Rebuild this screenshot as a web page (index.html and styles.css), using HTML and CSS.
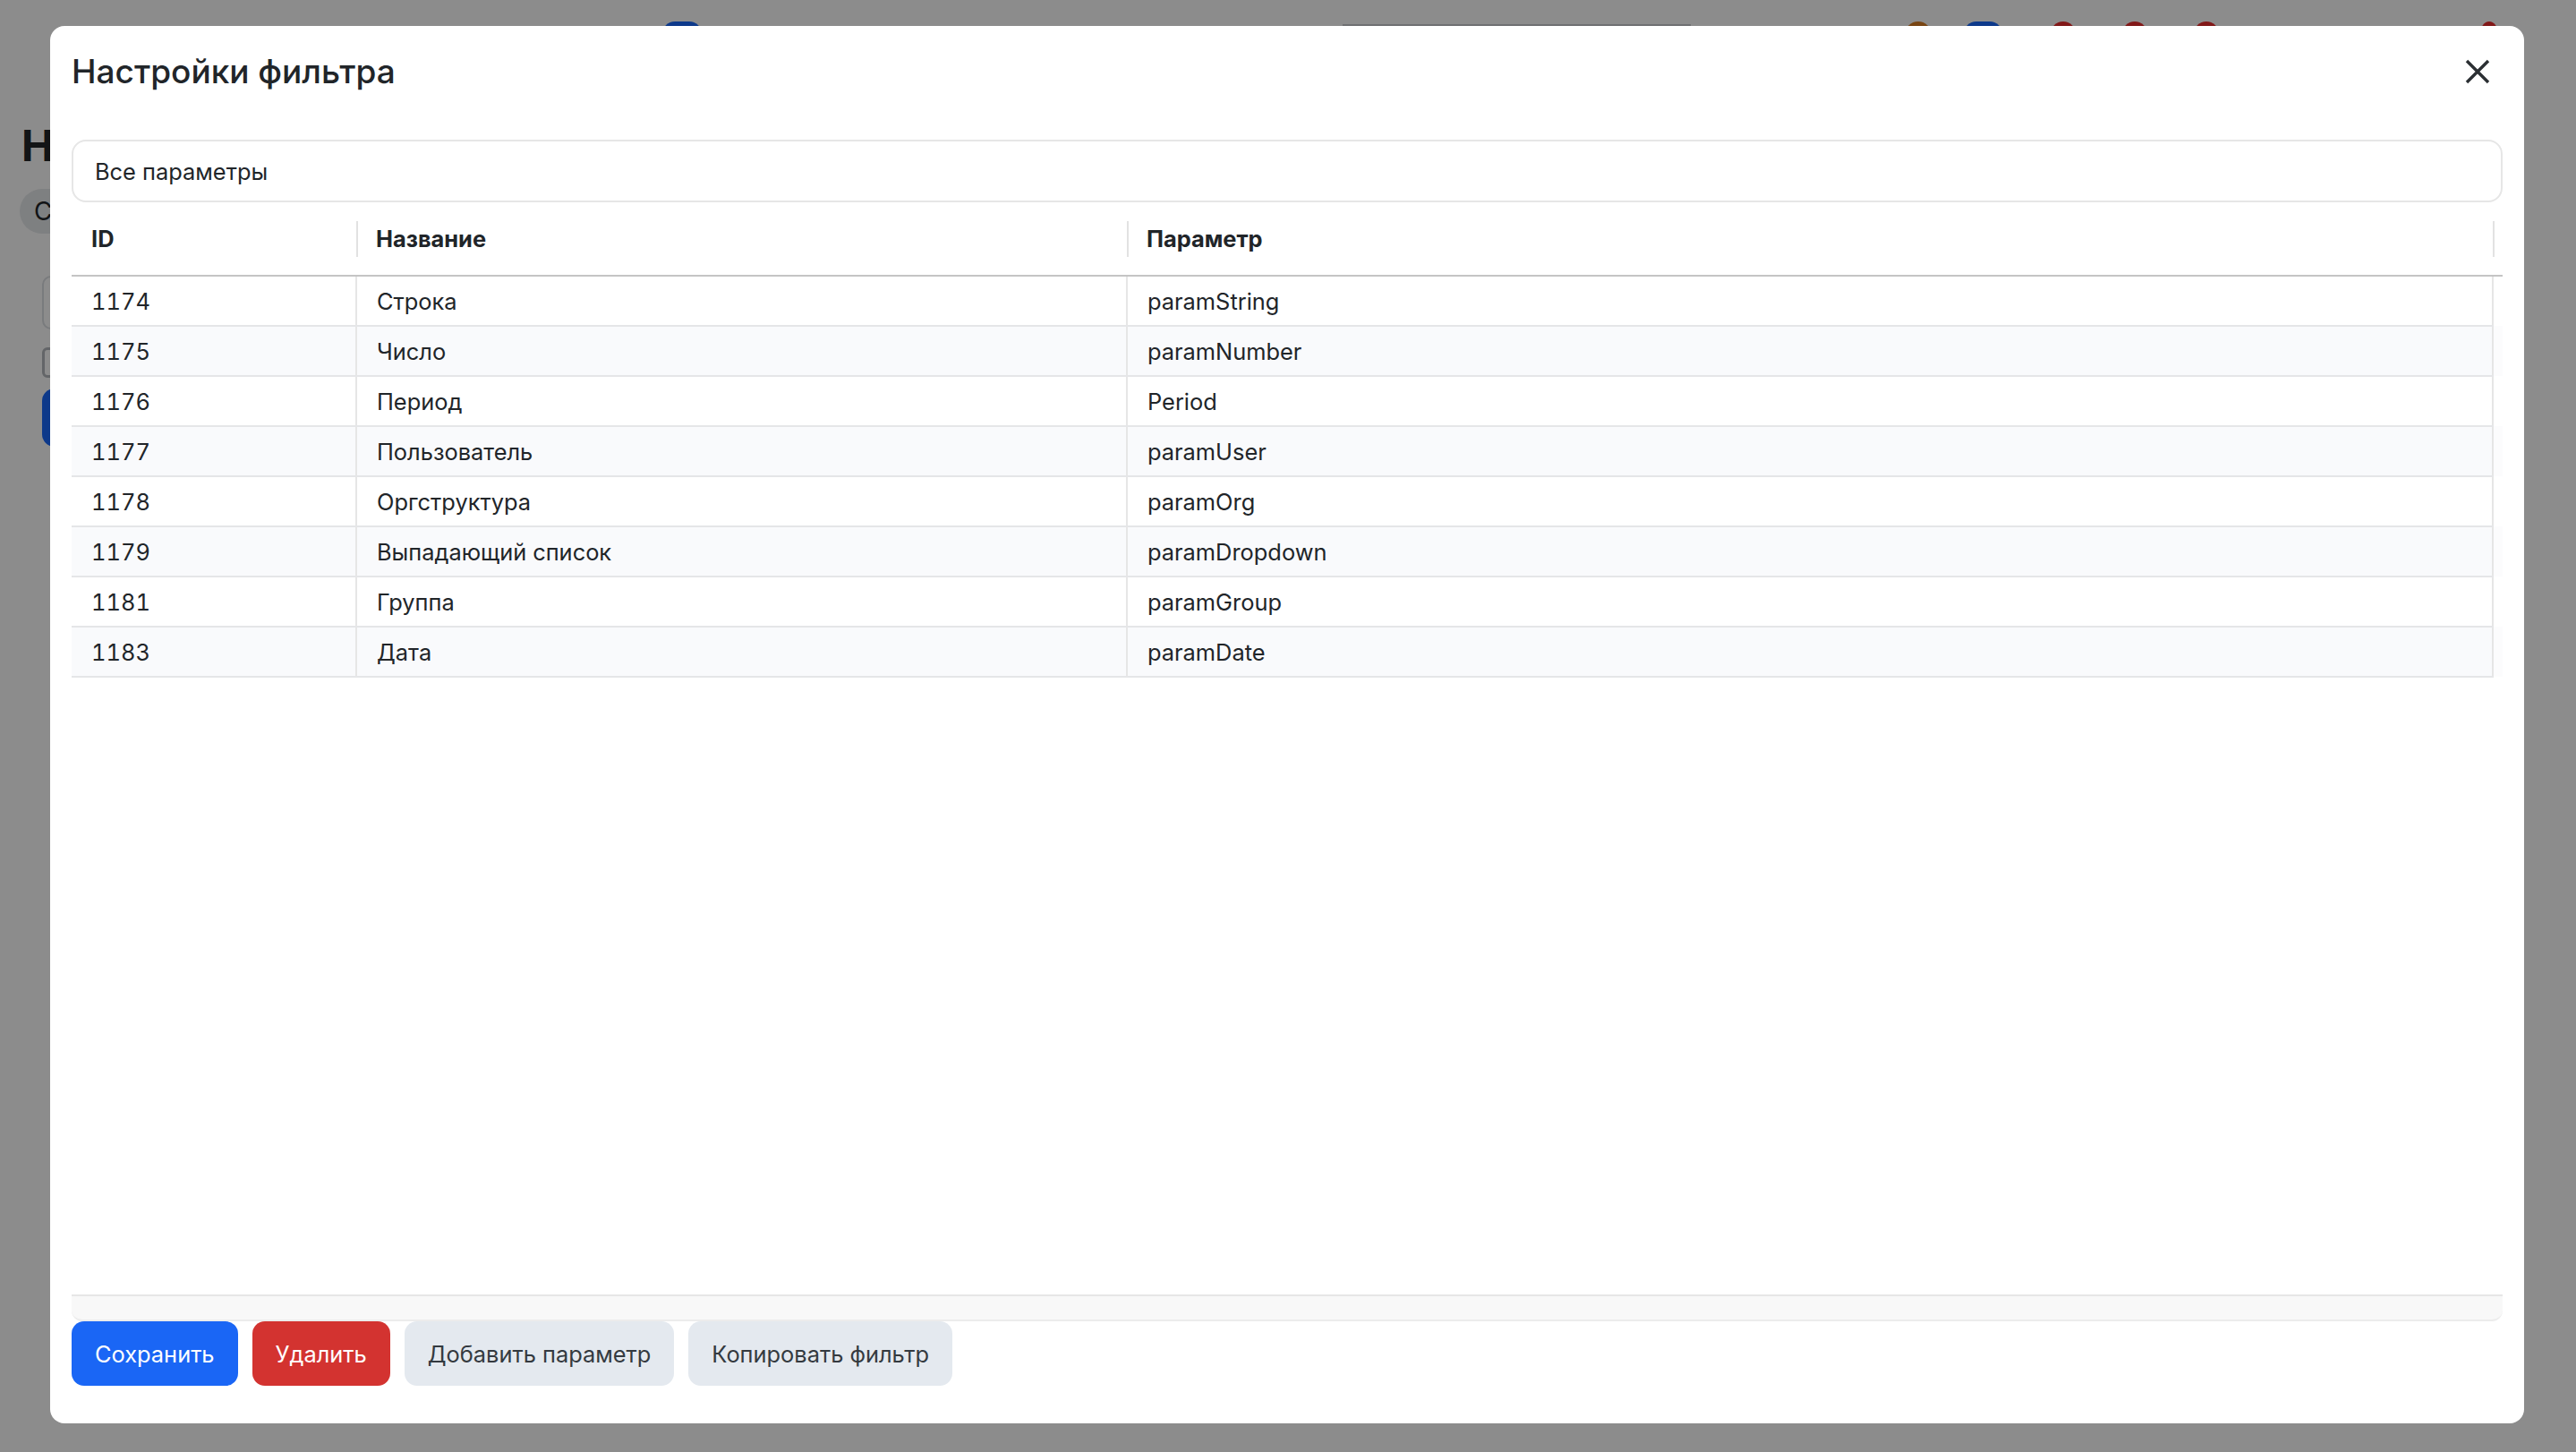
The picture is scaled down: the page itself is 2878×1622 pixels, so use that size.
FILE: index.html
```html
<!DOCTYPE html>
<html lang="ru">
<head>
    <meta charset="UTF-8">
    <meta name="viewport" content="width=device-width, initial-scale=1.0">
    <title>Настройки фильтра</title>
    <link rel="stylesheet" href="styles.css">
</head>
<body>
    <!-- page behind the dialog -->
    <div class="page">
        <div class="topbar">
            <span class="tb-pill"></span>
            <span class="tb-box"></span>
            <span class="tb-dot orange"></span>
            <span class="tb-dot blue"></span>
            <span class="tb-dot red"></span>
            <span class="tb-dot red"></span>
            <span class="tb-dot red"></span>
            <span class="tb-dot red last"></span>
        </div>
        <div class="side">
            <h2 class="page-title">На</h2>
            <div class="chip">С</div>
            <div class="field"></div>
            <div class="check"></div>
            <div class="side-btn"></div>
        </div>
    </div>

    <div class="backdrop"></div>

    <div class="modal">
        <div class="modal-header">
            <h5 class="modal-title">Настройки фильтра</h5>
            <button class="close" type="button" aria-label="Закрыть">
                <svg viewBox="0 0 28 28" width="28" height="28">
                    <path d="M2 2 L26 26 M26 2 L2 26" stroke="#2b2f33" stroke-width="3.4" fill="none"/>
                </svg>
            </button>
        </div>

        <div class="search">Все параметры</div>

        <div class="grid">
            <table class="params">
                <colgroup>
                    <col class="c-id">
                    <col class="c-name">
                    <col>
                    <col class="c-gutter">
                </colgroup>
                <thead>
                    <tr>
                        <th>ID</th>
                        <th class="sep">Название</th>
                        <th class="sep">Параметр</th>
                        <th class="gutter sep"></th>
                    </tr>
                </thead>
                <tbody>
                    <tr><td>1174</td><td>Строка</td><td>paramString</td><td class="gutter"></td></tr>
                    <tr><td>1175</td><td>Число</td><td>paramNumber</td><td class="gutter"></td></tr>
                    <tr><td>1176</td><td>Период</td><td>Period</td><td class="gutter"></td></tr>
                    <tr><td>1177</td><td>Пользователь</td><td>paramUser</td><td class="gutter"></td></tr>
                    <tr><td>1178</td><td>Оргструктура</td><td>paramOrg</td><td class="gutter"></td></tr>
                    <tr><td>1179</td><td>Выпадающий список</td><td>paramDropdown</td><td class="gutter"></td></tr>
                    <tr><td>1181</td><td>Группа</td><td>paramGroup</td><td class="gutter"></td></tr>
                    <tr><td>1183</td><td>Дата</td><td>paramDate</td><td class="gutter"></td></tr>
                </tbody>
            </table>
        </div>

        <div class="hscroll"></div>

        <div class="actions">
            <button class="btn btn-primary" type="button">Сохранить</button>
            <button class="btn btn-danger" type="button">Удалить</button>
            <button class="btn btn-light" type="button">Добавить параметр</button>
            <button class="btn btn-light" type="button">Копировать фильтр</button>
        </div>
    </div>
</body>
</html>
```

FILE: styles.css
```css
* {
    box-sizing: border-box;
}

html, body {
    margin: 0;
    height: 100%;
}

body {
    font-family: Inter, "Noto Sans", sans-serif;
    color: #212529;
    background: #fff;
    overflow: hidden;
}

/* background page */

.page {
    padding: 24px 0 0 22px;
}

.topbar {
    display: flex;
    align-items: flex-start;
    height: 60px;
}

.tb-pill {
    width: 44px;
    height: 60px;
    margin-left: 718px;
    border-radius: 14px;
    background: #1869fb;
}

.tb-box {
    width: 389px;
    height: 60px;
    margin-left: 716px;
    border-top: 2px solid #c9ccd0;
    margin-top: 3px;
}

.tb-dot {
    width: 28px;
    height: 28px;
    border-radius: 50%;
    background: #ec2d2d;
    margin-left: 52px;
}

.tb-dot.orange {
    width: 30px;
    height: 30px;
    margin-left: 239px;
    background: #da7f24;
}

.tb-dot.blue {
    width: 43px;
    height: 40px;
    margin-left: 36px;
    border-radius: 14px;
    background: #1869fb;
}

.tb-dot.red:nth-of-type(5) {
    margin-left: 54px;
}

.tb-dot.last {
    margin-left: 292px;
    width: 20px;
}

.side {
    padding-top: 50px;
}

.page-title {
    margin: 0 0 19px 2px;
    font-size: 48px;
    font-weight: 700;
    line-height: 58px;
}

.chip {
    width: 120px;
    height: 50px;
    line-height: 50px;
    padding: 0 16px;
    border-radius: 25px;
    background: #e6e9ec;
    font-size: 28px;
    margin-bottom: 47px;
}

.field {
    width: 400px;
    height: 60px;
    margin-left: 25px;
    border: 2px solid #dde0e3;
    border-radius: 10px;
    margin-bottom: 20px;
}

.check {
    width: 34px;
    height: 34px;
    margin-left: 25px;
    border: 3px solid #b5b9bd;
    border-radius: 6px;
    margin-bottom: 12px;
}

.side-btn {
    width: 200px;
    height: 65px;
    margin-left: 25px;
    border-radius: 14px;
    background: #1869fb;
}

/* dialog */

.backdrop {
    position: fixed;
    inset: 0;
    background: rgba(0, 0, 0, 0.45);
}

.modal {
    position: fixed;
    left: 56px;
    top: 29px;
    width: 2764px;
    height: 1561px;
    background: #fff;
    border-radius: 16px;
    display: flex;
    flex-direction: column;
    padding: 28px 24px 42px;
}

.modal-header {
    display: flex;
    align-items: center;
    justify-content: space-between;
    height: 46px;
    margin-bottom: 53px;
}

.modal-title {
    margin: 0;
    font-size: 37px;
    font-weight: 500;
    line-height: 46px;
}

.close {
    width: 28px;
    height: 28px;
    padding: 0;
    margin-right: 14px;
    border: none;
    background: none;
}

.close svg {
    display: block;
}

.search {
    height: 70px;
    display: flex;
    align-items: center;
    padding: 0 24px;
    border: 2px solid #e6e6e6;
    border-radius: 16px;
    font-size: 25.4px;
}

.grid {
    flex: 1;
}

.params {
    width: 100%;
    border-collapse: collapse;
    table-layout: fixed;
    font-size: 25.4px;
    font-variant-numeric: tabular-nums;
}

.c-id {
    width: 318px;
}

.c-name {
    width: 861px;
}

.c-gutter {
    width: 11px;
}

.params th {
    height: 82px;
    padding: 0 22px;
    text-align: left;
    font-weight: 700;
    border-bottom: 2px solid #c4c4c4;
}

.params th.sep {
    background: linear-gradient(#e2e2e2, #e2e2e2) left center / 2px 40px no-repeat;
}

.params td {
    height: 56px;
    padding: 0 22px;
    border-bottom: 2px solid #e5e6e8;
}

.params td + td {
    border-left: 2px solid #e6e6e6;
}

.params tbody tr:nth-child(even) td {
    background: #f9fafc;
}

.params td.gutter {
    padding: 0;
    border-bottom: none;
}

.params tbody tr:nth-child(even) td.gutter {
    background: #fcfcfd;
}

.hscroll {
    height: 30px;
    background: #f8f8f8;
    border-top: 2px solid #e6e6e6;
    border-bottom: 2px solid #ececec;
    border-radius: 0 0 12px 12px;
}

.actions {
    display: flex;
    gap: 16px;
}

.btn {
    height: 72px;
    padding: 0 26px;
    border: none;
    border-radius: 14px;
    font-family: inherit;
    font-size: 25.4px;
    cursor: pointer;
}

.btn-primary {
    background: #1a66f5;
    color: #fff;
}

.btn-danger {
    background: #d33330;
    color: #fff;
}

.btn-light {
    background: #e4e9ef;
    color: #343a40;
}
```
